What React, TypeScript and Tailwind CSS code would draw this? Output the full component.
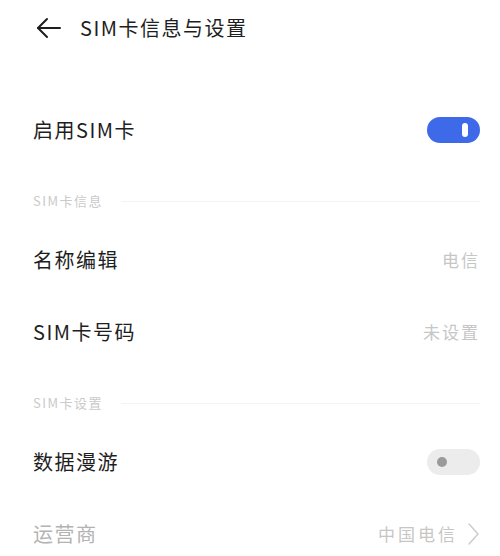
import React from 'react';

const font = { fontFamily: '"Noto Sans CJK SC", "Noto Sans", sans-serif' };

function Toggle({ on }: { on: boolean }) {
  if (on) {
    return (
      <div className="w-[53px] h-[26px] rounded-full bg-[#3e6ae9] flex items-center justify-end pr-[12px]">
        <div className="w-[6px] h-[14px] rounded-full bg-white" />
      </div>
    );
  }
  return (
    <div className="w-[53px] h-[26px] rounded-full bg-[#ececec] flex items-center pl-[10px]">
      <div className="w-[10px] h-[10px] rounded-full bg-[#9a9a9a]" />
    </div>
  );
}

function Row({ label, value, right, dim }: { label: string; value?: string; right?: React.ReactNode; dim?: boolean }) {
  return (
    <div className="h-[72px] flex items-center justify-between pl-[33px] pr-[20px]">
      <span className={`text-[20px] tracking-[1.5px] ${dim ? 'text-[#b3b3b3]' : 'text-[#1e1e1e]'}`}>{label}</span>
      {right ?? (
        <span className="text-[17px] text-[#c6c6c6] tracking-[2px]">{value}</span>
      )}
    </div>
  );
}

function Section({ title }: { title: string }) {
  return (
    <div className="h-[58px] pt-[27px] pl-[33px] pr-[20px] flex items-start gap-[18px]">
      <span className="text-[13px] leading-[16px] text-[#cacaca] tracking-[1.5px]">{title}</span>
      <div className="flex-1 h-px bg-[#f3f3f3] mt-[8px]" />
    </div>
  );
}

export default function App() {
  return (
    <div className="w-[500px] h-[556px] bg-white overflow-hidden" style={font}>
      {/* header */}
      <div className="h-[55px] flex items-center pl-[36px] gap-[18px]">
        <svg width="26" height="22" viewBox="0 0 26 22" fill="none" stroke="#1e1e1e" strokeWidth="2" strokeLinecap="round" strokeLinejoin="round">
          <path d="M24 11H2" />
          <path d="M11 2L2 11l9 9" />
        </svg>
        <span className="text-[20px] text-[#1e1e1e] tracking-[1.5px]">SIM卡信息与设置</span>
      </div>
      <div className="h-[39px]" />

      <Row label="启用SIM卡" right={<Toggle on />} />
      <Section title="SIM卡信息" />
      <Row label="名称编辑" value="电信" />
      <Row label="SIM卡号码" value="未设置" />
      <Section title="SIM卡设置" />
      <Row label="数据漫游" right={<Toggle on={false} />} />
      <Row
        label="运营商"
        dim
        right={
          <div className="flex items-center gap-[9px]">
            <span className="text-[17px] text-[#c6c6c6] tracking-[3px]">中国电信</span>
            <svg width="13" height="24" viewBox="0 0 13 24" fill="none" stroke="#cccccc" strokeWidth="1.5" strokeLinecap="round" strokeLinejoin="round">
              <path d="M2 2l9 10-9 10" />
            </svg>
          </div>
        }
      />
    </div>
  );
}
